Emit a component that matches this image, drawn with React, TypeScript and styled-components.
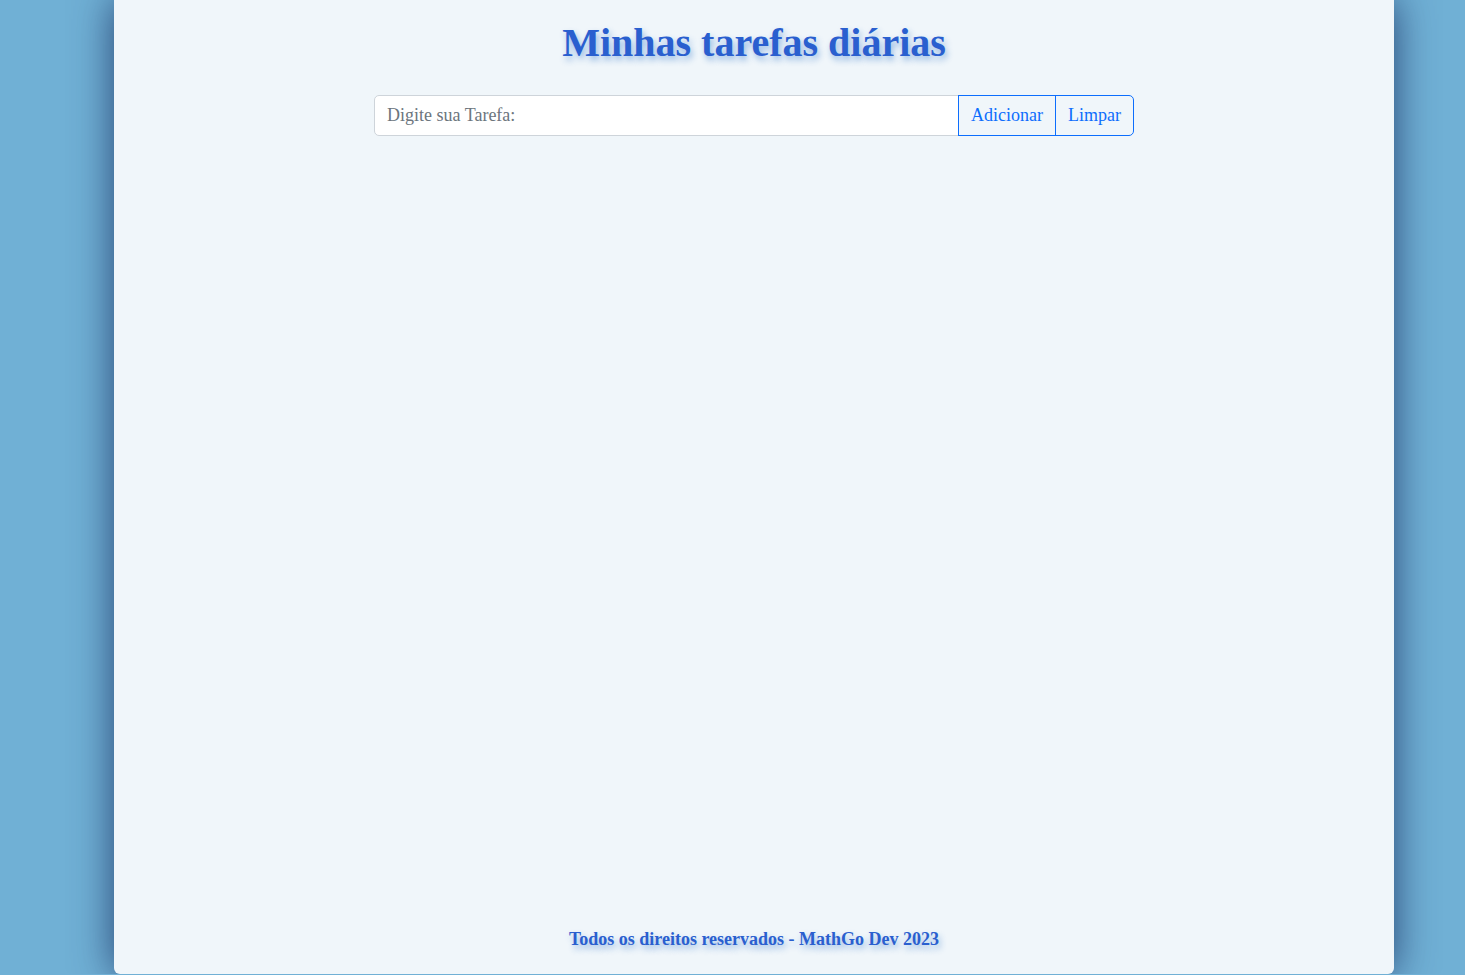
import styled, { createGlobalStyle } from 'styled-components';

const GlobalStyle = createGlobalStyle`
  * {
    box-sizing: border-box;
  }
  body {
    margin: 0;
    background: #70b0d5;
    font-family: "Liberation Serif", "Times New Roman", serif;
  }
`;

const Page = styled.div`
  width: 1280px;
  height: 974px;
  margin: 0 0 0 114px;
  background: #f0f6fa;
  border-radius: 0 0 6px 6px;
  box-shadow: 0 0 40px rgba(20, 40, 90, 0.8);
  display: flex;
  flex-direction: column;
  align-items: center;
`;

const Title = styled.h1`
  margin: 19px 0 0;
  font-size: 40px;
  font-weight: 700;
  color: #2a5fcf;
  text-shadow: 2px 4px 6px rgba(40, 110, 200, 0.45);
`;

const InputGroup = styled.form`
  display: flex;
  width: 760px;
  margin-top: 29px;
`;

const TaskInput = styled.input`
  flex: 1;
  height: 41px;
  padding: 0 12px;
  font-family: inherit;
  font-size: 18px;
  color: #212529;
  background: #fff;
  border: 1px solid #ced4da;
  border-radius: 5px 0 0 5px;
  outline: none;

  &::placeholder {
    color: #6c757d;
  }
`;

const GroupButton = styled.button<{ $last?: boolean }>`
  height: 41px;
  padding: 0 12px;
  margin-left: -1px;
  font-family: inherit;
  font-size: 18px;
  color: #0d6efd;
  background: transparent;
  border: 1px solid #0d6efd;
  border-radius: ${({ $last }) => ($last ? '0 5px 5px 0' : '0')};
  cursor: pointer;
`;

const Content = styled.main`
  flex: 1;
`;

const Footer = styled.footer`
  margin-bottom: 24px;
  font-size: 18px;
  font-weight: 700;
  color: #2a5fcf;
  text-shadow: 2px 4px 6px rgba(40, 110, 200, 0.45);
`;

export default function App() {
  return (
    <>
      <GlobalStyle />
      <Page>
        <Title>Minhas tarefas diárias</Title>
        <InputGroup onSubmit={(e) => e.preventDefault()}>
          <TaskInput type="text" placeholder="Digite sua Tarefa:" />
          <GroupButton type="submit">Adicionar</GroupButton>
          <GroupButton type="button" $last>
            Limpar
          </GroupButton>
        </InputGroup>
        <Content />
        <Footer>Todos os direitos reservados - MathGo Dev 2023</Footer>
      </Page>
    </>
  );
}
